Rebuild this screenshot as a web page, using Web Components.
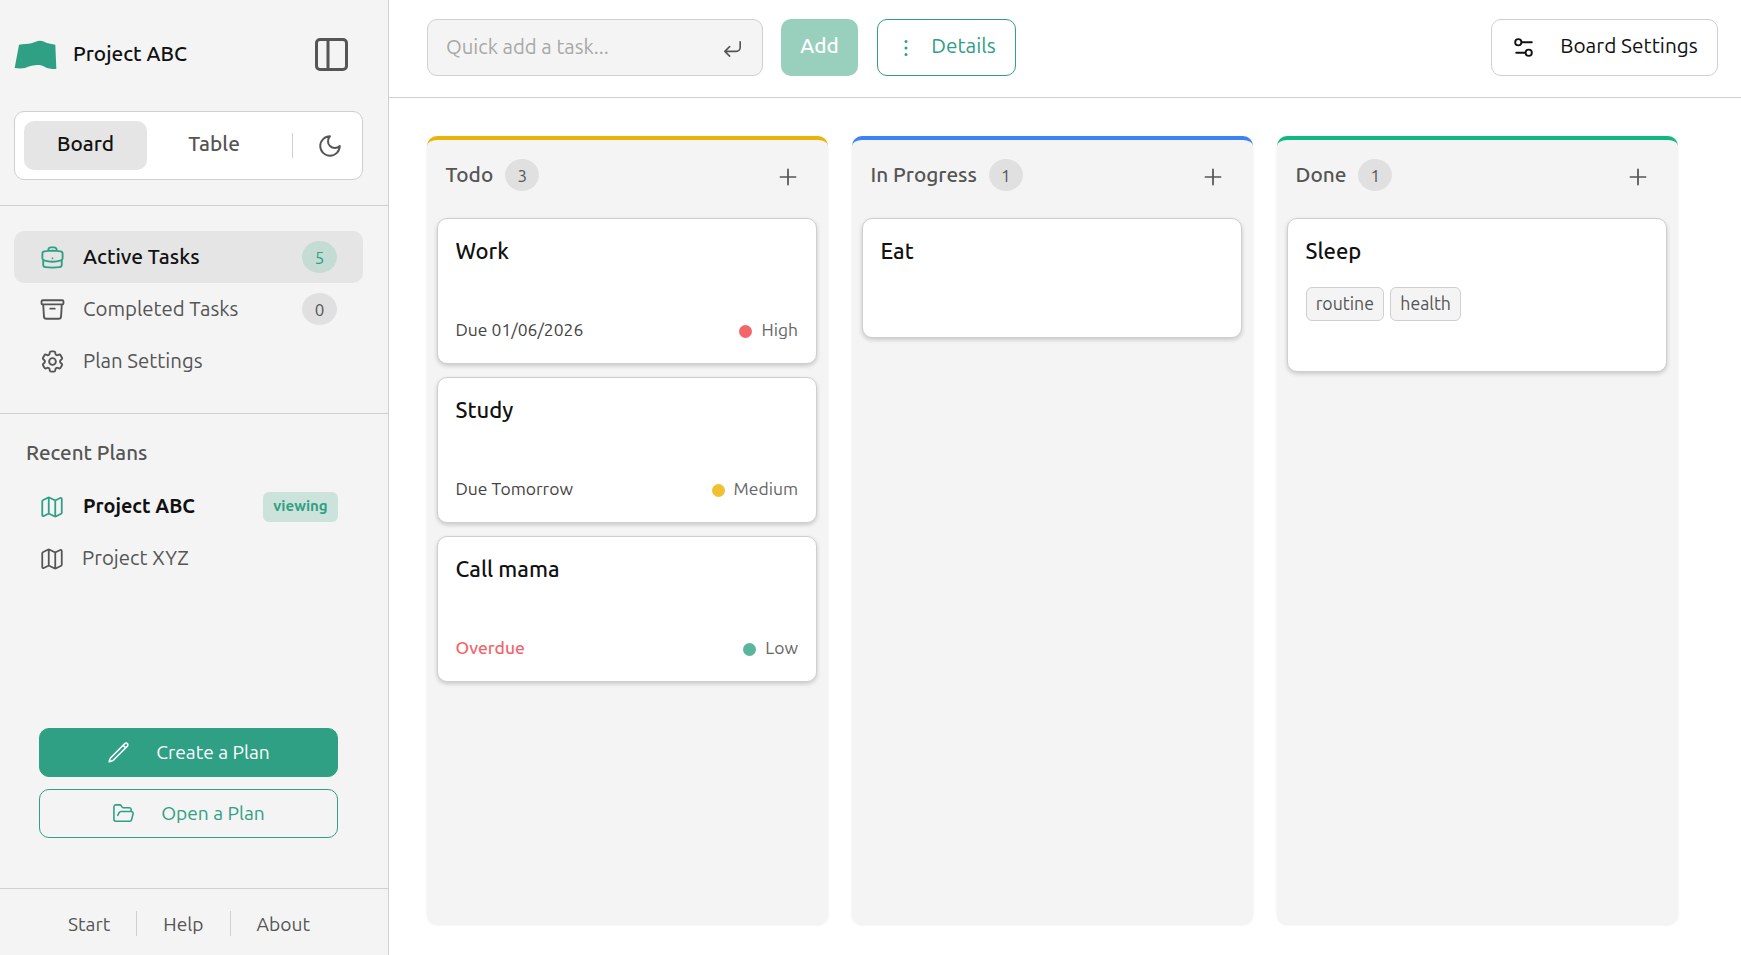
<!DOCTYPE html>
<html lang="en">
<head>
<meta charset="utf-8">
<title>Project ABC</title>
<style>
  html, body { margin: 0; height: 100%; }
  body {
    font-family: Ubuntu, "Noto Sans", "Open Sans", sans-serif;
    color: #111;
    background: #fff;
    overflow: hidden;
    --green: #2fa084;
    --line: #cfcfcf;
    --soft: #f4f4f4;
    --muted: #555;
  }
</style>
</head>
<body>

<app-shell>
  <side-bar slot="side"></side-bar>
  <top-bar slot="top"></top-bar>

  <board-column title="Todo" count="3" accent="#eab308">
    <task-card title="Work">
      <span slot="due">Due 01/06/2026</span>
      <prio-tag slot="prio" color="#f2666a">High</prio-tag>
    </task-card>
    <task-card title="Study">
      <span slot="due">Due Tomorrow</span>
      <prio-tag slot="prio" color="#f0c032">Medium</prio-tag>
    </task-card>
    <task-card title="Call mama">
      <span slot="due" style="color:#f2666a;font-weight:500">Overdue</span>
      <prio-tag slot="prio" color="#59b59c">Low</prio-tag>
    </task-card>
  </board-column>

  <board-column title="In Progress" count="1" accent="#3b82f6">
    <task-card title="Eat"></task-card>
  </board-column>

  <board-column title="Done" count="1" accent="#10b981">
    <task-card title="Sleep" tags="routine,health"></task-card>
  </board-column>
</app-shell>

<script>
const ICONS = {
  briefcase: 'M20.25 14.15v4.25c0 1.094-.787 2.036-1.872 2.18-2.087.277-4.216.42-6.378.42s-4.291-.143-6.378-.42c-1.085-.144-1.872-1.086-1.872-2.18v-4.25m16.5 0a2.18 2.18 0 0 0 .75-1.661V8.706c0-1.081-.768-2.015-1.837-2.175a48.114 48.114 0 0 0-3.413-.387m4.5 8.006c-.194.165-.42.295-.673.38A23.978 23.978 0 0 1 12 15.75c-2.648 0-5.195-.429-7.577-1.22a2.016 2.016 0 0 1-.673-.38m0 0A2.18 2.18 0 0 1 3 12.489V8.706c0-1.081.768-2.015 1.837-2.175a48.111 48.111 0 0 1 3.413-.387m7.5 0V5.25A2.25 2.25 0 0 0 13.5 3h-3a2.25 2.25 0 0 0-2.25 2.25v.894m7.5 0a48.667 48.667 0 0 0-7.5 0M12 12.75h.008v.008H12v-.008Z',
  archive: 'm20.25 7.5-.625 10.632a2.25 2.25 0 0 1-2.247 2.118H6.622a2.25 2.25 0 0 1-2.247-2.118L3.75 7.5M10 11.25h4M3.375 7.5h17.25c.621 0 1.125-.504 1.125-1.125v-1.5c0-.621-.504-1.125-1.125-1.125H3.375c-.621 0-1.125.504-1.125 1.125v1.5c0 .621.504 1.125 1.125 1.125Z',
  cog: 'M9.594 3.94c.09-.542.56-.94 1.11-.94h2.593c.55 0 1.02.398 1.11.94l.213 1.281c.063.374.313.686.645.87.074.04.147.083.22.127.325.196.72.257 1.075.124l1.217-.456a1.125 1.125 0 0 1 1.37.49l1.296 2.247a1.125 1.125 0 0 1-.26 1.431l-1.003.827c-.293.241-.438.613-.43.992a7.723 7.723 0 0 1 0 .255c-.008.378.137.75.43.991l1.004.827c.424.35.534.955.26 1.43l-1.298 2.247a1.125 1.125 0 0 1-1.369.491l-1.217-.456c-.355-.133-.75-.072-1.076.124a6.47 6.47 0 0 1-.22.128c-.331.183-.581.495-.644.869l-.213 1.281c-.09.543-.56.94-1.11.94h-2.594c-.55 0-1.019-.398-1.11-.94l-.213-1.281c-.062-.374-.312-.686-.644-.87a6.52 6.52 0 0 1-.22-.127c-.325-.196-.72-.257-1.076-.124l-1.217.456a1.125 1.125 0 0 1-1.369-.49l-1.297-2.247a1.125 1.125 0 0 1 .26-1.431l1.004-.827c.292-.24.437-.613.43-.991a6.932 6.932 0 0 1 0-.255c.007-.38-.138-.751-.43-.992l-1.004-.827a1.125 1.125 0 0 1-.26-1.43l1.297-2.247a1.125 1.125 0 0 1 1.37-.491l1.216.456c.356.133.751.072 1.076-.124.072-.044.146-.086.22-.128.332-.183.582-.495.644-.869l.214-1.28ZM15 12a3 3 0 1 1-6 0 3 3 0 0 1 6 0Z',
  map: 'M14.106 5.553a2 2 0 0 0 1.788 0l3.659-1.83A1 1 0 0 1 21 4.619v12.764a1 1 0 0 1-.553.894l-4.553 2.277a2 2 0 0 1-1.788 0l-4.212-2.106a2 2 0 0 0-1.788 0l-3.659 1.83A1 1 0 0 1 3 19.381V6.618a1 1 0 0 1 .553-.894l4.553-2.277a2 2 0 0 1 1.788 0zM15 5.764v15M9 3.236v15',
  pencil: 'm16.862 4.487 1.687-1.688a1.875 1.875 0 1 1 2.652 2.652L6.832 19.82a4.5 4.5 0 0 1-1.897 1.13l-2.685.8.8-2.685a4.5 4.5 0 0 1 1.13-1.897L16.863 4.487Zm0 0L19.5 7.125',
  folder: 'm6 14 1.5-2.9A2 2 0 0 1 9.24 10H20a2 2 0 0 1 1.94 2.5l-1.54 6a2 2 0 0 1-1.95 1.5H4a2 2 0 0 1-2-2V5a2 2 0 0 1 2-2h3.9a2 2 0 0 1 1.69.9l.81 1.2a2 2 0 0 0 1.67.9H18a2 2 0 0 1 2 2v2',
  moon: 'M12 3a6 6 0 0 0 9 9 9 9 0 1 1-9-9Z',
  enter: 'M20 5v6a4 4 0 0 1-4 4H4M9 10l-5 5 5 5',
  dots: 'M12 5.5v.01M12 12v.01M12 18.5v.01',
  plus: 'M5 12h14M12 5v14',
  sliders: 'M20 7h-9M14 17H5M10 7a3 3 0 1 1-6 0 3 3 0 0 1 6 0ZM20 17a3 3 0 1 1-6 0 3 3 0 0 1 6 0Z'
};

function icon(name, size, stroke) {
  return `<svg width="${size}" height="${size}" viewBox="0 0 24 24" fill="none" stroke="currentColor" stroke-width="${stroke}" stroke-linecap="round" stroke-linejoin="round"><path d="${ICONS[name]}"/></svg>`;
}

class AppShell extends HTMLElement {
  connectedCallback() {
    this.attachShadow({ mode: 'open' });
    this.shadowRoot.innerHTML = `
      <style>
        :host { display: flex; height: 100vh; }
        main { flex: 1; min-width: 0; display: flex; flex-direction: column; }
        .board {
          flex: 1;
          display: grid;
          grid-template-columns: repeat(3, 1fr);
          gap: 23.5px;
          padding: 38px 63px 31px 37.5px;
          min-height: 0;
        }
      </style>
      <slot name="side"></slot>
      <main>
        <slot name="top"></slot>
        <div class="board"><slot></slot></div>
      </main>
    `;
  }
}

class SideBar extends HTMLElement {
  connectedCallback() {
    this.attachShadow({ mode: 'open' });
    this.shadowRoot.innerHTML = `
      <style>
        :host {
          display: flex;
          flex-direction: column;
          width: 388px;
          flex: none;
          background: var(--soft);
          border-right: 1.5px solid var(--line);
        }
        .head { padding: 0 25px 25px 14px; border-bottom: 1.5px solid var(--line); }
        .brand { height: 111px; box-sizing: border-box; padding-bottom: 2px; display: flex; align-items: center; }
        .brand .logo { width: 45px; height: 31.67px; margin-left: -.67px; margin-right: 14.67px; }
        .brand b { font-size: 20.8px; font-weight: 500; flex: 1; margin-top: -3px; }
        .panel { width: 33px; height: 33px; margin-right: 15px; color: #555; }
        .seg {
          height: 69px;
          box-sizing: border-box;
          background: #fff;
          border: 1px solid var(--line);
          border-radius: 10px;
          display: flex;
          align-items: center;
          padding: 0 9px;
          font-size: 20.8px;
          font-weight: 500;
        }
        .seg span { display: flex; align-items: center; justify-content: center; height: 49px; box-sizing: border-box; padding-bottom: 4px; border-radius: 10px; }
        .seg .on { width: 123px; background: #e5e5e5; }
        .seg .off { width: 134px; color: #555; }
        .seg i { width: 1px; height: 25px; background: var(--line); margin-left: 11px; }
        .seg svg { margin-left: 24px; color: #555; }
        .nav { padding: 25px 25px 25.5px 14px; border-bottom: 1.5px solid var(--line); }
        .recent { padding: 26px 25px 0 14px; }
        .recent h3 { margin: 0 0 15px 12px; font-size: 20.6px; line-height: 26px; font-weight: 500; color: #555; }
        .actions {
          margin-top: auto;
          padding: 0 50px 50px 39px;
          display: flex;
          flex-direction: column;
          gap: 12px;
          border-bottom: 1.5px solid var(--line);
        }
        .foot {
          height: 66px;
          display: flex;
          align-items: center;
          justify-content: center;
          font-size: 19.2px;
          color: #555;
          padding-top: 3px;
          padding-right: 10px;
          box-sizing: border-box;
        }
        .foot i { width: 1px; height: 25px; background: var(--line); margin: 0 26px; }
      </style>
      <div class="head">
        <div class="brand">
          <svg class="logo" viewBox="10 25 135 95"><path fill="#2fa084" d="M28 42C40 40 55 41 65 38 75 35 82 30 90 30 100 30 108 36 115 38 122 40 130 41 137 42L140 115C132 116 122 115 115 113 106 110 98 103 90 103 80 103 72 105 65 105 55 107 48 112 40 113 32 114 22 113 15 112Z"/></svg>
          <b>Project ABC</b>
          <svg class="panel" viewBox="0 0 33 33" fill="none" stroke="currentColor" stroke-width="3"><rect x="1.5" y="1.5" width="30" height="30" rx="3.5"/><path d="M13 1.5v30"/></svg>
        </div>
        <div class="seg">
          <span class="on">Board</span><span class="off">Table</span><i></i>${icon('moon', 26, 1.8)}
        </div>
      </div>
      <div class="nav">
        <nav-item icon="briefcase" active count="5">Active Tasks</nav-item>
        <nav-item icon="archive" count="0">Completed Tasks</nav-item>
        <nav-item icon="cog">Plan Settings</nav-item>
      </div>
      <div class="recent">
        <h3>Recent Plans</h3>
        <plan-item current>Project ABC</plan-item>
        <plan-item>Project XYZ</plan-item>
      </div>
      <div class="actions">
        <wide-button icon="pencil" filled>Create a Plan</wide-button>
        <wide-button icon="folder">Open a Plan</wide-button>
      </div>
      <div class="foot"><span>Start</span><i></i><span>Help</span><i></i><span>About</span></div>
    `;
  }
}

class NavItem extends HTMLElement {
  connectedCallback() {
    const count = this.getAttribute('count');
    this.attachShadow({ mode: 'open' });
    this.shadowRoot.innerHTML = `
      <style>
        :host {
          display: flex;
          align-items: center;
          height: 52px;
          padding: 0 26px 0 25px;
          border-radius: 10px;
          font-size: 20.4px;
          color: #555;
        }
        :host([active]) { background: #e5e5e5; color: #111; font-weight: 500; font-size: 20.9px; }
        svg { color: #555; margin-right: 17px; }
        :host([active]) svg { color: var(--green); }
        .txt { flex: 1; margin-top: -2px; }
        .badge {
          width: 35px;
          height: 32px;
          border-radius: 50%;
          display: flex;
          align-items: center;
          justify-content: center;
          font-size: 17px;
          font-weight: 400;
          background: #e0e0e0;
        }
        :host([active]) .badge { background: #c4dcd4; color: var(--green); }
      </style>
      ${icon(this.getAttribute('icon'), 27, 1.65)}
      <span class="txt"><slot></slot></span>
      ${count !== null ? `<span class="badge">${count}</span>` : ''}
    `;
  }
}

class PlanItem extends HTMLElement {
  connectedCallback() {
    const current = this.hasAttribute('current');
    this.attachShadow({ mode: 'open' });
    this.shadowRoot.innerHTML = `
      <style>
        :host {
          display: flex;
          align-items: center;
          height: 52px;
          padding: 0 25px;
          font-size: 20.4px;
          color: #555;
        }
        :host([current]) { color: #111; font-weight: 600; font-size: 19.8px; }
        svg { color: #555; margin-right: 17px; }
        :host([current]) svg { color: var(--green); }
        .txt { flex: 1; margin-top: -2px; }
        :host([current]) .txt { margin-left: 1px; }
        .tag {
          width: 75px;
          height: 30px;
          border-radius: 6px;
          display: flex;
          align-items: center;
          justify-content: center;
          background: #cce3dc;
          color: var(--green);
          font-size: 15px;
          font-weight: 600;
          box-sizing: border-box;
          padding-bottom: 2px;
        }
      </style>
      ${icon('map', 26, 1.65)}
      <span class="txt"><slot></slot></span>
      ${current ? '<span class="tag">viewing</span>' : ''}
    `;
  }
}

class WideButton extends HTMLElement {
  connectedCallback() {
    this.attachShadow({ mode: 'open' });
    this.shadowRoot.innerHTML = `
      <style>
        :host {
          display: flex;
          align-items: center;
          justify-content: center;
          gap: 26px;
          height: 49px;
          box-sizing: border-box;
          border: 1px solid var(--green);
          border-radius: 10px;
          color: var(--green);
          font-size: 19.2px;
        }
        :host([filled]) { background: var(--green); color: #fff; }
        span { margin-top: -2px; }
      </style>
      ${icon(this.getAttribute('icon'), 23, 1.65)}
      <span><slot></slot></span>
    `;
  }
}

class TopBar extends HTMLElement {
  connectedCallback() {
    this.attachShadow({ mode: 'open' });
    this.shadowRoot.innerHTML = `
      <style>
        :host {
          display: flex;
          align-items: center;
          gap: 18px;
          height: 98px;
          box-sizing: border-box;
          padding: 0 23px 2px 38px;
          border-bottom: 1.5px solid var(--line);
          font-size: 20.8px;
        }
        .quick {
          width: 336px;
          height: 57px;
          box-sizing: border-box;
          display: flex;
          align-items: center;
          padding: 0 18px;
          background: var(--soft);
          border: 1px solid var(--line);
          border-radius: 10px;
          color: #555;
        }
        .quick span { flex: 1; color: #a8a8a8; font-size: 20.3px; margin-top: -2px; }
        .quick svg { margin-top: 2px; }
        .btn {
          height: 57px;
          box-sizing: border-box;
          border-radius: 10px;
          display: flex;
          align-items: center;
          justify-content: center;
        }
        .btn span { margin-top: -4px; }
        .add { width: 77px; background: #98d0bd; color: #fff; font-weight: 500; }
        .details { width: 139px; gap: 13px; margin-left: 1px; border: 1px solid var(--green); color: var(--green); }
        .details svg { margin-left: -3px; }
        .settings {
          width: 227px;
          margin-left: auto;
          gap: 24px;
          border: 1px solid var(--line);
          color: #111;
        }
      </style>
      <div class="quick"><span>Quick add a task...</span>${icon('enter', 23, 1.7)}</div>
      <div class="btn add"><span>Add</span></div>
      <div class="btn details">${icon('dots', 24, 3)}<span>Details</span></div>
      <div class="btn settings">${icon('sliders', 25, 1.8)}<span>Board Settings</span></div>
    `;
  }
}

class BoardColumn extends HTMLElement {
  connectedCallback() {
    this.attachShadow({ mode: 'open' });
    this.shadowRoot.innerHTML = `
      <style>
        :host {
          display: flex;
          flex-direction: column;
          box-sizing: border-box;
          background: var(--soft);
          border-top: 4px solid ${this.getAttribute('accent')};
          border-radius: 10px;
          padding: 0 11px 0 10px;
          box-shadow: 0 1px 3px rgba(0,0,0,.08);
        }
        header {
          height: 78px;
          box-sizing: border-box;
          display: flex;
          align-items: center;
          padding: 0 8px 9px 9px;
          color: #555;
          font-size: 20.8px;
          font-weight: 500;
        }
        .count {
          width: 34px;
          height: 32px;
          margin-left: 12px;
          margin-top: 1px;
          border-radius: 50%;
          display: flex;
          align-items: center;
          justify-content: center;
          background: #e0e0e0;
          font-size: 17px;
          font-weight: 400;
        }
        svg { margin-left: auto; margin-right: 8px; margin-top: 4px; }
        .cards { display: flex; flex-direction: column; gap: 13px; }
      </style>
      <header>
        <span>${this.getAttribute('title')}</span>
        <span class="count">${this.getAttribute('count')}</span>
        ${icon('plus', 26, 1.6)}
      </header>
      <div class="cards"><slot></slot></div>
    `;
  }
}

class TaskCard extends HTMLElement {
  connectedCallback() {
    const tags = this.getAttribute('tags');
    const due = this.querySelector('[slot=due]');
    this.attachShadow({ mode: 'open' });
    this.shadowRoot.innerHTML = `
      <style>
        :host {
          display: block;
          box-sizing: border-box;
          background: #fff;
          border: 1px solid var(--line);
          border-radius: 10px;
          padding: 18px 18px 21px;
          box-shadow: 0 2px 4px rgba(0,0,0,.18);
        }
        h4 { margin: 0; font-size: 22px; line-height: 28px; font-weight: 500; color: #111; }
        .body { min-height: 51px; }
        .tags { display: flex; gap: 6px; padding: 22px 0 29px; }
        .tags span {
          height: 34px;
          box-sizing: border-box;
          padding: 0 9.2px 2px;
          display: flex;
          align-items: center;
          border: 1px solid var(--line);
          border-radius: 6px;
          background: var(--soft);
          color: #555;
          font-size: 17.7px;
        }
        .meta {
          height: 26px;
          display: flex;
          align-items: center;
          justify-content: space-between;
          font-size: 17.5px;
          color: #444;
        }
      </style>
      <h4>${this.getAttribute('title')}</h4>
      <div class="body">
        ${tags ? `<div class="tags">${tags.split(',').map(t => `<span>${t}</span>`).join('')}</div>` : ''}
      </div>
      ${due ? '<div class="meta"><slot name="due"></slot><slot name="prio"></slot></div>' : ''}
    `;
  }
}

class PrioTag extends HTMLElement {
  connectedCallback() {
    this.attachShadow({ mode: 'open' });
    this.shadowRoot.innerHTML = `
      <style>
        :host { display: inline-flex; align-items: center; gap: 9px; color: #666; font-size: 17.5px; }
        i { width: 13px; height: 13px; border-radius: 50%; background: ${this.getAttribute('color')}; margin-top: 4px; }
      </style>
      <i></i><span><slot></slot></span>
    `;
  }
}

customElements.define('app-shell', AppShell);
customElements.define('side-bar', SideBar);
customElements.define('nav-item', NavItem);
customElements.define('plan-item', PlanItem);
customElements.define('wide-button', WideButton);
customElements.define('top-bar', TopBar);
customElements.define('board-column', BoardColumn);
customElements.define('task-card', TaskCard);
customElements.define('prio-tag', PrioTag);
</script>
</body>
</html>
